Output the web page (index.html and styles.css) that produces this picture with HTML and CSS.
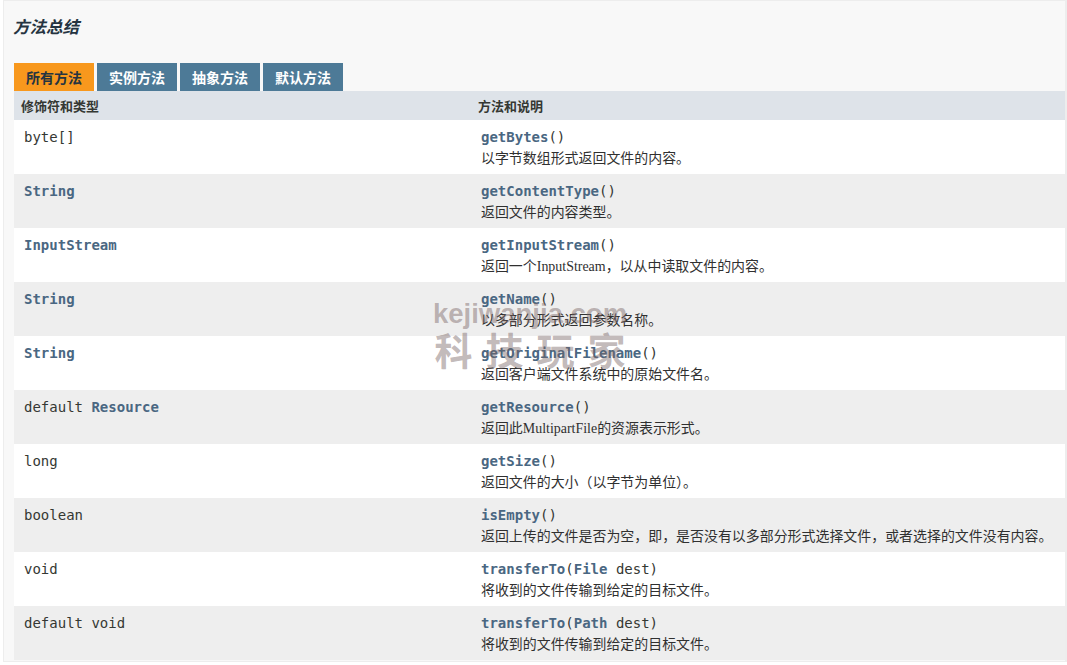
FILE: index.html
```html
<!DOCTYPE html>
<html lang="zh">
<head>
<meta charset="utf-8">
<title>方法总结</title>
<link rel="stylesheet" href="styles.css">
</head>
<body>
<div class="summary">
  <h3 class="title">方法总结</h3>
  <div class="tabs">
    <span class="tab active">所有方法</span>
    <span class="tab">实例方法</span>
    <span class="tab">抽象方法</span>
    <span class="tab">默认方法</span>
  </div>
  <div class="table">
    <div class="th">修饰符和类型</div>
    <div class="th th2">方法和说明</div>

    <div class="td c1"><code>byte[]</code></div>
    <div class="td c2"><code><a>getBytes</a>()</code><div class="desc">以字节数组形式返回文件的内容。</div></div>

    <div class="td c1 alt"><code><a>String</a></code></div>
    <div class="td c2 alt"><code><a>getContentType</a>()</code><div class="desc">返回文件的内容类型。</div></div>

    <div class="td c1"><code><a>InputStream</a></code></div>
    <div class="td c2"><code><a>getInputStream</a>()</code><div class="desc">返回一个InputStream，以从中读取文件的内容。</div></div>

    <div class="td c1 alt"><code><a>String</a></code></div>
    <div class="td c2 alt"><code><a>getName</a>()</code><div class="desc">以多部分形式返回参数名称。</div></div>

    <div class="td c1"><code><a>String</a></code></div>
    <div class="td c2"><code><a>getOriginalFilename</a>()</code><div class="desc">返回客户端文件系统中的原始文件名。</div></div>

    <div class="td c1 alt"><code>default <a>Resource</a></code></div>
    <div class="td c2 alt"><code><a>getResource</a>()</code><div class="desc">返回此MultipartFile的资源表示形式。</div></div>

    <div class="td c1"><code>long</code></div>
    <div class="td c2"><code><a>getSize</a>()</code><div class="desc">返回文件的大小（以字节为单位）。</div></div>

    <div class="td c1 alt"><code>boolean</code></div>
    <div class="td c2 alt"><code><a>isEmpty</a>()</code><div class="desc">返回上传的文件是否为空，即，是否没有以多部分形式选择文件，或者选择的文件没有内容。</div></div>

    <div class="td c1"><code>void</code></div>
    <div class="td c2"><code><a>transferTo</a>(<a>File</a> dest)</code><div class="desc">将收到的文件传输到给定的目标文件。</div></div>

    <div class="td c1 alt"><code>default void</code></div>
    <div class="td c2 alt"><code><a>transferTo</a>(<a>Path</a> dest)</code><div class="desc">将收到的文件传输到给定的目标文件。</div></div>
  </div>
  <div class="watermark">
    <span class="wm-en">kejiwanjia.com</span>
    <span class="wm-cn">科技玩家</span>
  </div>
</div>
</body>
</html>
```

FILE: styles.css
```css
html, body {
  margin: 0;
  padding: 0;
  background: #ffffff;
}

body {
  font-family: "Liberation Sans", "Noto Sans CJK SC", sans-serif;
  color: #353833;
}

.summary {
  position: relative;
  margin-left: 3px;
  border: 1px solid #ededed;
  border-right-width: 2px;
  background: #f8f8f8;
  padding: 0 0 1px 10px;
  overflow: hidden;
}

.title {
  margin: 0 0 0 -1px;
  padding-top: 15px;
  line-height: 22px;
  font-size: 16.5px;
  font-style: italic;
  font-weight: bold;
  color: #253441;
  font-family: "Liberation Sans", "Noto Sans CJK SC", sans-serif;
}

.tabs {
  display: flex;
  gap: 3px;
  margin-top: 25px;
}

.tab {
  display: block;
  width: 80px;
  height: 28px;
  line-height: 28px;
  text-align: center;
  font-size: 14px;
  font-weight: bold;
  background: #4d7a97;
  color: #ffffff;
  font-family: "Noto Sans CJK SC", sans-serif;
}

.tab.active {
  background: #f8981d;
  color: #253441;
}

.table {
  display: grid;
  grid-template-columns: 457px 1fr;
}

.th {
  background: #dee3e9;
  height: 29px;
  line-height: 29px;
  padding-left: 7px;
  font-size: 13px;
  font-weight: bold;
  color: #353833;
  font-family: "Noto Sans CJK SC", sans-serif;
}

.td {
  background: #ffffff;
  height: 54px;
  box-sizing: border-box;
  padding: 7px 3px 0 10px;
}

.td.alt {
  background: #eeeeee;
}

code {
  display: block;
  font-family: "DejaVu Sans Mono", monospace;
  font-size: 14px;
  line-height: 20px;
  color: #353833;
  white-space: nowrap;
}

code a {
  color: #4a6782;
  font-weight: bold;
  text-decoration: none;
}

.desc {
  margin-top: 2px;
  font-family: "Liberation Serif", "Noto Sans CJK SC", serif;
  font-size: 13.95px;
  line-height: 20px;
  color: #303030;
  white-space: nowrap;
}

.watermark {
  position: absolute;
  left: 429px;
  top: 298px;
  display: flex;
  flex-direction: column;
  align-items: center;
  pointer-events: none;
}

.wm-en {
  font-family: "Liberation Sans", sans-serif;
  font-weight: bold;
  font-size: 27.5px;
  line-height: 30px;
  color: rgba(120, 100, 100, 0.45);
}

.wm-cn {
  font-family: "Noto Sans CJK SC", sans-serif;
  font-weight: bold;
  font-size: 38px;
  line-height: 40px;
  letter-spacing: 13px;
  margin-right: -13px;
  color: rgba(120, 100, 100, 0.45);
}
```
